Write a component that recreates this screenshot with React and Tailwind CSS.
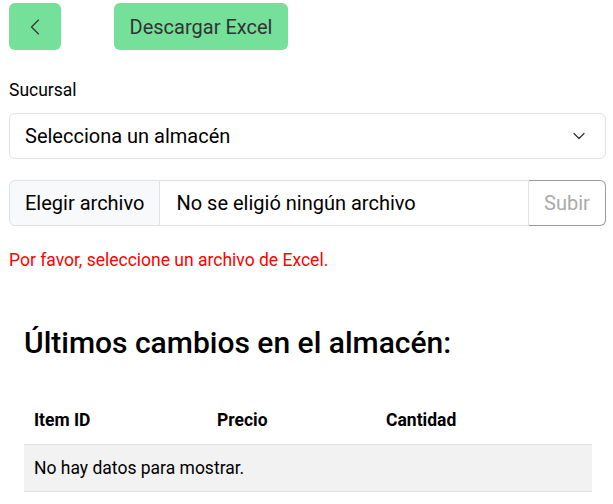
import { ChevronLeft, ChevronDown } from 'lucide-react';

export default function App() {
  return (
    <div className="min-h-screen bg-white pl-[9px] pr-[7px] pt-[3px] font-['Roboto',sans-serif] text-black">
      <div className="flex items-center gap-[53px]">
        <button className="flex h-[47px] w-[52px] items-center justify-center rounded-[6px] bg-[#75e099] text-[#333]">
          <ChevronLeft size={28} strokeWidth={1} />
        </button>
        <button className="h-[47px] w-[174px] rounded-[6px] bg-[#75e099] text-[20px] text-[#333]">
          Descargar Excel
        </button>
      </div>

      <label className="mt-[27px] block text-[17.5px] leading-[26px]">Sucursal</label>
      <div className="mt-[10px] flex h-[46px] items-center justify-between rounded-[6px] border border-[#dee2e6] pl-[15px] pr-[16px] text-[20px]">
        <span>Selecciona un almacén</span>
        <ChevronDown size={20} strokeWidth={1.5} className="text-[#333]" />
      </div>

      <div className="mt-[21px] flex h-[46px] text-[20px]">
        <div className="flex items-center rounded-l-[6px] border border-[#dee2e6] bg-[#f8f9fa] px-[15px]">
          Elegir archivo
        </div>
        <div className="flex flex-1 items-center border-y border-r border-[#dee2e6] pl-[16px]">
          No se eligió ningún archivo
        </div>
        <button className="w-[77px] rounded-r-[6px] border border-l-0 border-[#9a9a9a] text-[#aaa]">Subir</button>
      </div>

      <p className="mt-[21px] text-[17.5px] leading-[26px] text-[#f00]">Por favor, seleccione un archivo de Excel.</p>

      <div className="pl-[15px] pr-[14px]">
        <h2 className="mt-[51px] text-[30px] font-medium leading-[38px]">Últimos cambios en el almacén:</h2>

        <table className="mt-[45px] w-full border-collapse text-[17.5px]">
          <thead>
            <tr className="border-b border-[#dee2e6]">
              <th className="w-[183px] px-[10px] pb-[11px] text-left font-bold leading-[26px]">Item ID</th>
              <th className="w-[169px] px-[10px] pb-[11px] text-left font-bold leading-[26px]">Precio</th>
              <th className="px-[10px] pb-[11px] text-left font-bold leading-[26px]">Cantidad</th>
            </tr>
          </thead>
          <tbody>
            <tr className="border-b border-[#dee2e6] bg-[#f2f2f2]">
              <td colSpan={3} className="h-[47px] px-[10px]">No hay datos para mostrar.</td>
            </tr>
          </tbody>
        </table>
      </div>
    </div>
  );
}
